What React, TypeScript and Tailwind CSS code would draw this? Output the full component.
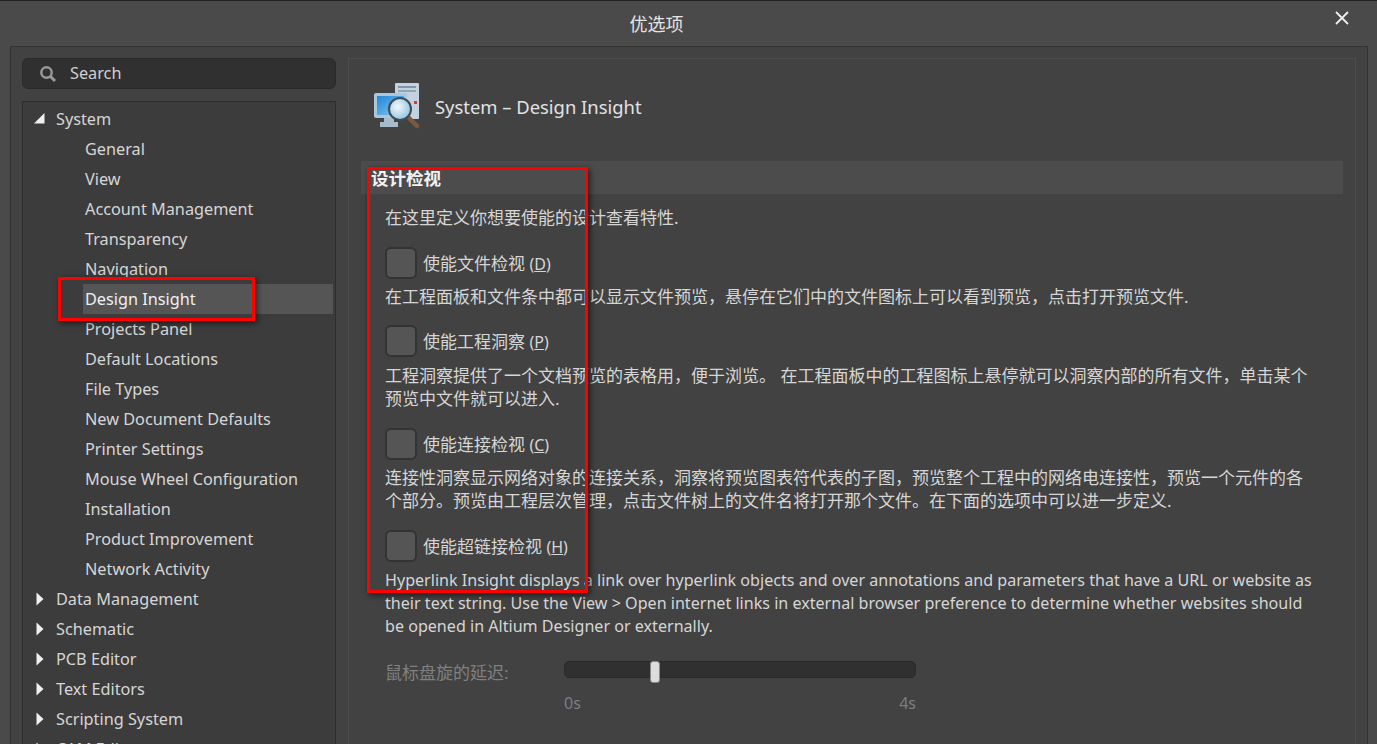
const FONT = "font-['Noto_Sans','Noto_Sans_CJK_SC',sans-serif]";

const children = ["General","View","Account Management","Transparency","Navigation","Design Insight","Projects Panel","Default Locations","File Types","New Document Defaults","Printer Settings","Mouse Wheel Configuration","Installation","Product Improvement","Network Activity"];
const after = ["Data Management","Schematic","PCB Editor","Text Editors","Scripting System","CAM Editor"];

function Arrow({ open }: { open?: boolean }) {
  return (
    <svg width="12" height="16" viewBox="0 0 12 16" className="shrink-0">
      {open ? <polygon points="0,12.5 10.5,12.5 10.5,2" fill="#f0f0f0" /> : <polygon points="2.5,1.5 2.5,14.5 9.5,8" fill="#f0f0f0" />}
    </svg>
  );
}

function Group({ label, open }: { label: string; open?: boolean }) {
  return (
    <div className="flex h-[30px] items-center pl-[11px] gap-[10px] text-[#d6d6d6]">
      <Arrow open={open} />
      <span>{label}</span>
    </div>
  );
}

function Check({ label, hot }: { label: string; hot: string }) {
  return (
    <div className="flex items-center gap-[6px] h-[32px]">
      <div className="w-[32px] h-[32px] rounded-[6px] border-2 border-[#333333] bg-[#555555]" />
      <span className="text-[17px] pt-[2px]">{label} <span className="text-[16px]">(<span className="underline">{hot}</span>)</span></span>
    </div>
  );
}

function InsightIcon() {
  return (
    <svg width="46" height="48" viewBox="0 0 46 48" className="shrink-0">
      <defs>
        <linearGradient id="scr" x1="0" y1="0" x2="1" y2="1">
          <stop offset="0" stopColor="#1f86d8" />
          <stop offset="1" stopColor="#8ec8ee" />
        </linearGradient>
        <radialGradient id="lens" cx="0.4" cy="0.4" r="0.7">
          <stop offset="0" stopColor="#f4f9fc" />
          <stop offset="1" stopColor="#86bce2" />
        </radialGradient>
      </defs>
      <rect x="21" y="1" width="24" height="36" rx="1" fill="#c4d2dd" />
      <rect x="24" y="4" width="18" height="2" fill="#7f97a8" />
      <rect x="24" y="8" width="18" height="2" fill="#8fa6b6" />
      <rect x="40" y="19" width="3" height="3" fill="#e0343a" />
      <rect x="0" y="11" width="33" height="25" rx="2" fill="#a9c8de" />
      <rect x="3" y="14" width="27" height="19" fill="url(#scr)" />
      <path d="M10 36h10v4h4v5H6v-5h4z" fill="#a6bccb" />
      <line x1="34" y1="35" x2="43" y2="44" stroke="#7a5a42" strokeWidth="4.5" strokeLinecap="round" />
      <circle cx="26" cy="27" r="11" fill="url(#lens)" stroke="#3f4a52" strokeWidth="2" />
    </svg>
  );
}

export default function App() {
  return (
    <div className={`${FONT} relative w-[1377px] h-[744px] overflow-hidden bg-[#4a4a4a] border-t border-[#222222] text-[16.25px] leading-[23px] text-[#d6d6d6]`}>
      <header className="relative h-[45px] flex items-center justify-center pt-[2px] pr-[64px] text-[18px] text-[#e4e4e4]">
        <span>优选项</span>
        <svg width="14" height="14" viewBox="0 0 14 14" className="absolute right-[28px] top-[10px]">
          <path d="M1 1l12 12M13 1L1 13" stroke="#eeeeee" strokeWidth="1.8" />
        </svg>
      </header>

      <div className="ml-[10px] mr-[9px] h-[700px] border border-[#333333] border-b-0 bg-[#424242] pt-[11px] pl-[11px] pr-[11px] flex gap-[12px]">
        <div className="w-[314px] shrink-0 flex flex-col gap-[12px]">
          <div className="h-[31px] shrink-0 rounded-[6px] bg-[#303030] border border-[#2a2a2a] flex items-center pl-[16px] gap-[13px]">
            <svg width="18" height="18" viewBox="0 0 18 18">
              <circle cx="7.5" cy="7.5" r="5.2" fill="none" stroke="#9a9a9a" strokeWidth="2.4" />
              <path d="M11.5 11.5L16 16" stroke="#9a9a9a" strokeWidth="3" />
            </svg>
            <span className="text-[#cfcfcf]">Search</span>
          </div>
          <div className="flex-1 bg-[#3c3c3c] border border-[#2d2d2d] border-b-0 pt-[2px] overflow-hidden">
            <Group label="System" open />
            {children.map((c) => (
              <div
                key={c}
                className={`h-[30px] flex items-center pl-[2px] mr-[2px] ml-[60px] ${c === "Design Insight" ? "bg-[#555555] text-[#f0f0f0]" : ""}`}
              >
                {c}
              </div>
            ))}
            {after.map((c) => <Group key={c} label={c} />)}
          </div>
        </div>

        <div className="flex-1 border border-[#4c4c4c] border-b-0 pl-[12px] pr-[12px]">
          <div className="flex items-center h-[102px] pb-[8px] pl-[13px] gap-[15px]">
            <InsightIcon />
            <span className="text-[18.4px] text-[#e2e2e2]">System – Design Insight</span>
          </div>
          <div className="h-[33px] bg-[#4c4c4c] flex items-center pl-[10px] pt-[2px] font-bold text-[17.5px] text-[#f2f2f2]">设计检视</div>
          <div className="pl-[24px] pr-[24px]">
            <p className="mt-[12px] text-[17px]">在这里定义你想要使能的设计查看特性.</p>
            <div className="mt-[18px]"><Check label="使能文件检视" hot="D" /></div>
            <p className="mt-[6px] text-[17px]">在工程面板和文件条中都可以显示文件预览，悬停在它们中的文件图标上可以看到预览，点击打开预览文件.</p>
            <div className="mt-[17px]"><Check label="使能工程洞察" hot="P" /></div>
            <p className="mt-[7px] text-[17px]">工程洞察提供了一个文档预览的表格用，便于浏览。 在工程面板中的工程图标上悬停就可以洞察内部的所有文件，单击某个预览中文件就可以进入.</p>
            <div className="mt-[18px]"><Check label="使能连接检视" hot="C" /></div>
            <p className="mt-[6px] text-[17px]">连接性洞察显示网络对象的连接关系，洞察将预览图表符代表的子图，预览整个工程中的网络电连接性，预览一个元件的各个部分。预览由工程层次管理，点击文件树上的文件名将打开那个文件。在下面的选项中可以进一步定义.</p>
            <div className="mt-[18px]"><Check label="使能超链接检视" hot="H" /></div>
            <p className="mt-[7px] text-[16.1px]">Hyperlink Insight displays a link over hyperlink objects and over annotations and parameters that have a URL or website as their text string. Use the View &gt; Open internet links in external browser preference to determine whether websites should be opened in Altium Designer or externally.</p>
            <div className="mt-[23px] flex items-start text-[#808080]">
              <span className="w-[179px] shrink-0 text-[17px]">鼠标盘旋的延迟:</span>
              <div className="w-[352px] shrink-0">
                <div className="relative h-[17px] rounded-[5px] bg-[#303030] border border-[#2a2a2a]">
                  <div className="absolute left-[85px] -top-[1px] w-[10px] h-[22px] rounded-[3px] bg-[#dcdcdc] border border-[#888888]" />
                </div>
                <div className="flex justify-between mt-[14px] text-[16px] text-[#7a7f85]"><span>0s</span><span>4s</span></div>
              </div>
            </div>
          </div>
        </div>
      </div>

      <div className="absolute left-[58px] top-[276px] w-[197px] h-[44px] border-[3px] border-[#ff0000] shadow-[2px_2px_6px_rgba(0,0,0,0.6)]" />
      <div className="absolute left-[367px] top-[166px] w-[221px] h-[426px] border-[3px] border-[#ff0000] shadow-[2px_2px_6px_rgba(0,0,0,0.6)]" />
    </div>
  );
}
